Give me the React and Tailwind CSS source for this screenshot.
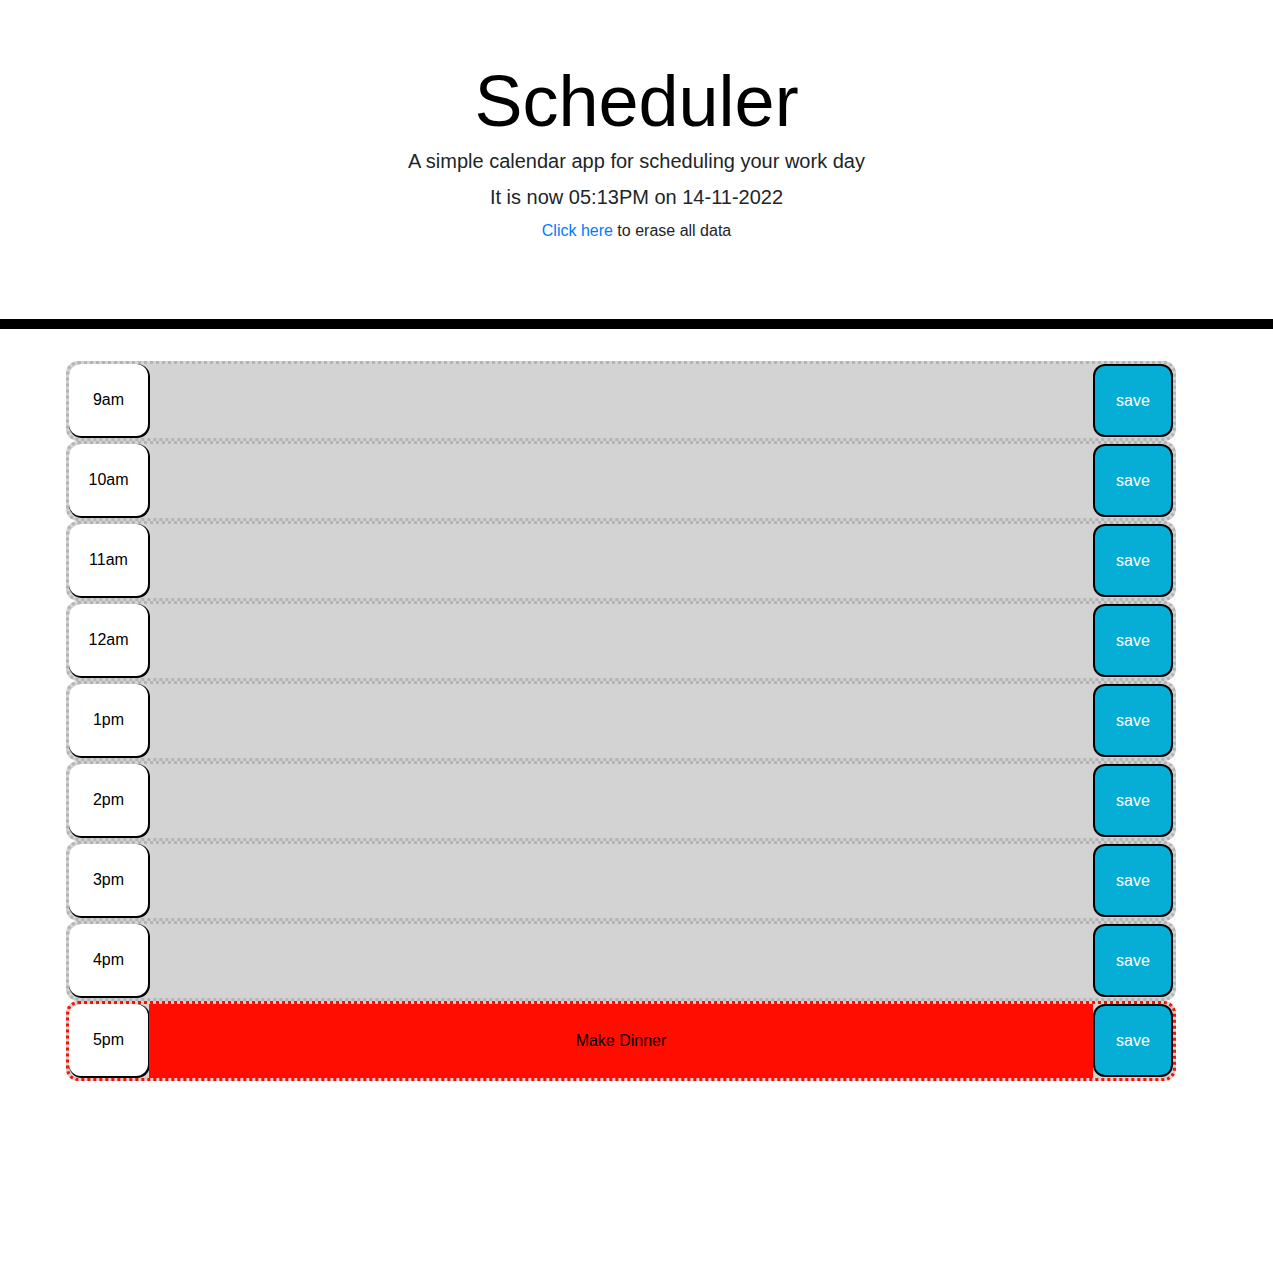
const hours = [
  ["9am", "past", ""],
  ["10am", "past", ""],
  ["11am", "past", ""],
  ["12am", "past", ""],
  ["1pm", "past", ""],
  ["2pm", "past", ""],
  ["3pm", "past", ""],
  ["4pm", "past", ""],
  ["5pm", "present", "Make Dinner"],
];

export default function App() {
  return (
    <div className="min-h-[1275px] bg-white font-['Liberation_Sans',Arial,sans-serif] text-[#212529]">
      {/* Header */}
      <header className="border-b-[10px] border-black pt-[58px] pb-[76px] text-center">
        <h1 className="text-[72px] leading-[86px] text-black">Scheduler</h1>
        <p className="mt-[2px] text-[20px] leading-[30px]">
          A simple calendar app for scheduling your work day
        </p>
        <p className="mt-[6px] text-[20px] leading-[30px]">
          It is now 05:13PM on 14-11-2022
        </p>
        <p className="mt-[7px] text-base leading-6">
          <a href="#" className="text-[#007bff]">Click here</a> to erase all data
        </p>
      </header>

      {/* Time blocks */}
      <main className="ml-[66px] mt-8 w-[1110px]">
        {hours.map(([label, state, text]) => (
          <div
            key={label}
            className={`flex h-20 rounded-xl border-[3px] border-dotted bg-[#d3d3d3] ${
              state === "present" ? "border-[#ff0d00]" : "border-[#b4b4b4]"
            }`}
          >
            <div className="mb-[2px] flex w-[79px] items-center justify-center rounded-xl bg-white text-base text-black shadow-[1px_1px_0_1px_#000]">
              {label}
            </div>
            <div
              className={`ml-px flex flex-1 items-center justify-center text-base text-black ${
                state === "present" ? "bg-[#ff0d00]" : ""
              }`}
            >
              {text}
            </div>
            <button className="mb-px w-20 rounded-xl border-2 border-black bg-[#06aed5] text-base text-white">
              save
            </button>
          </div>
        ))}
      </main>
    </div>
  );
}
